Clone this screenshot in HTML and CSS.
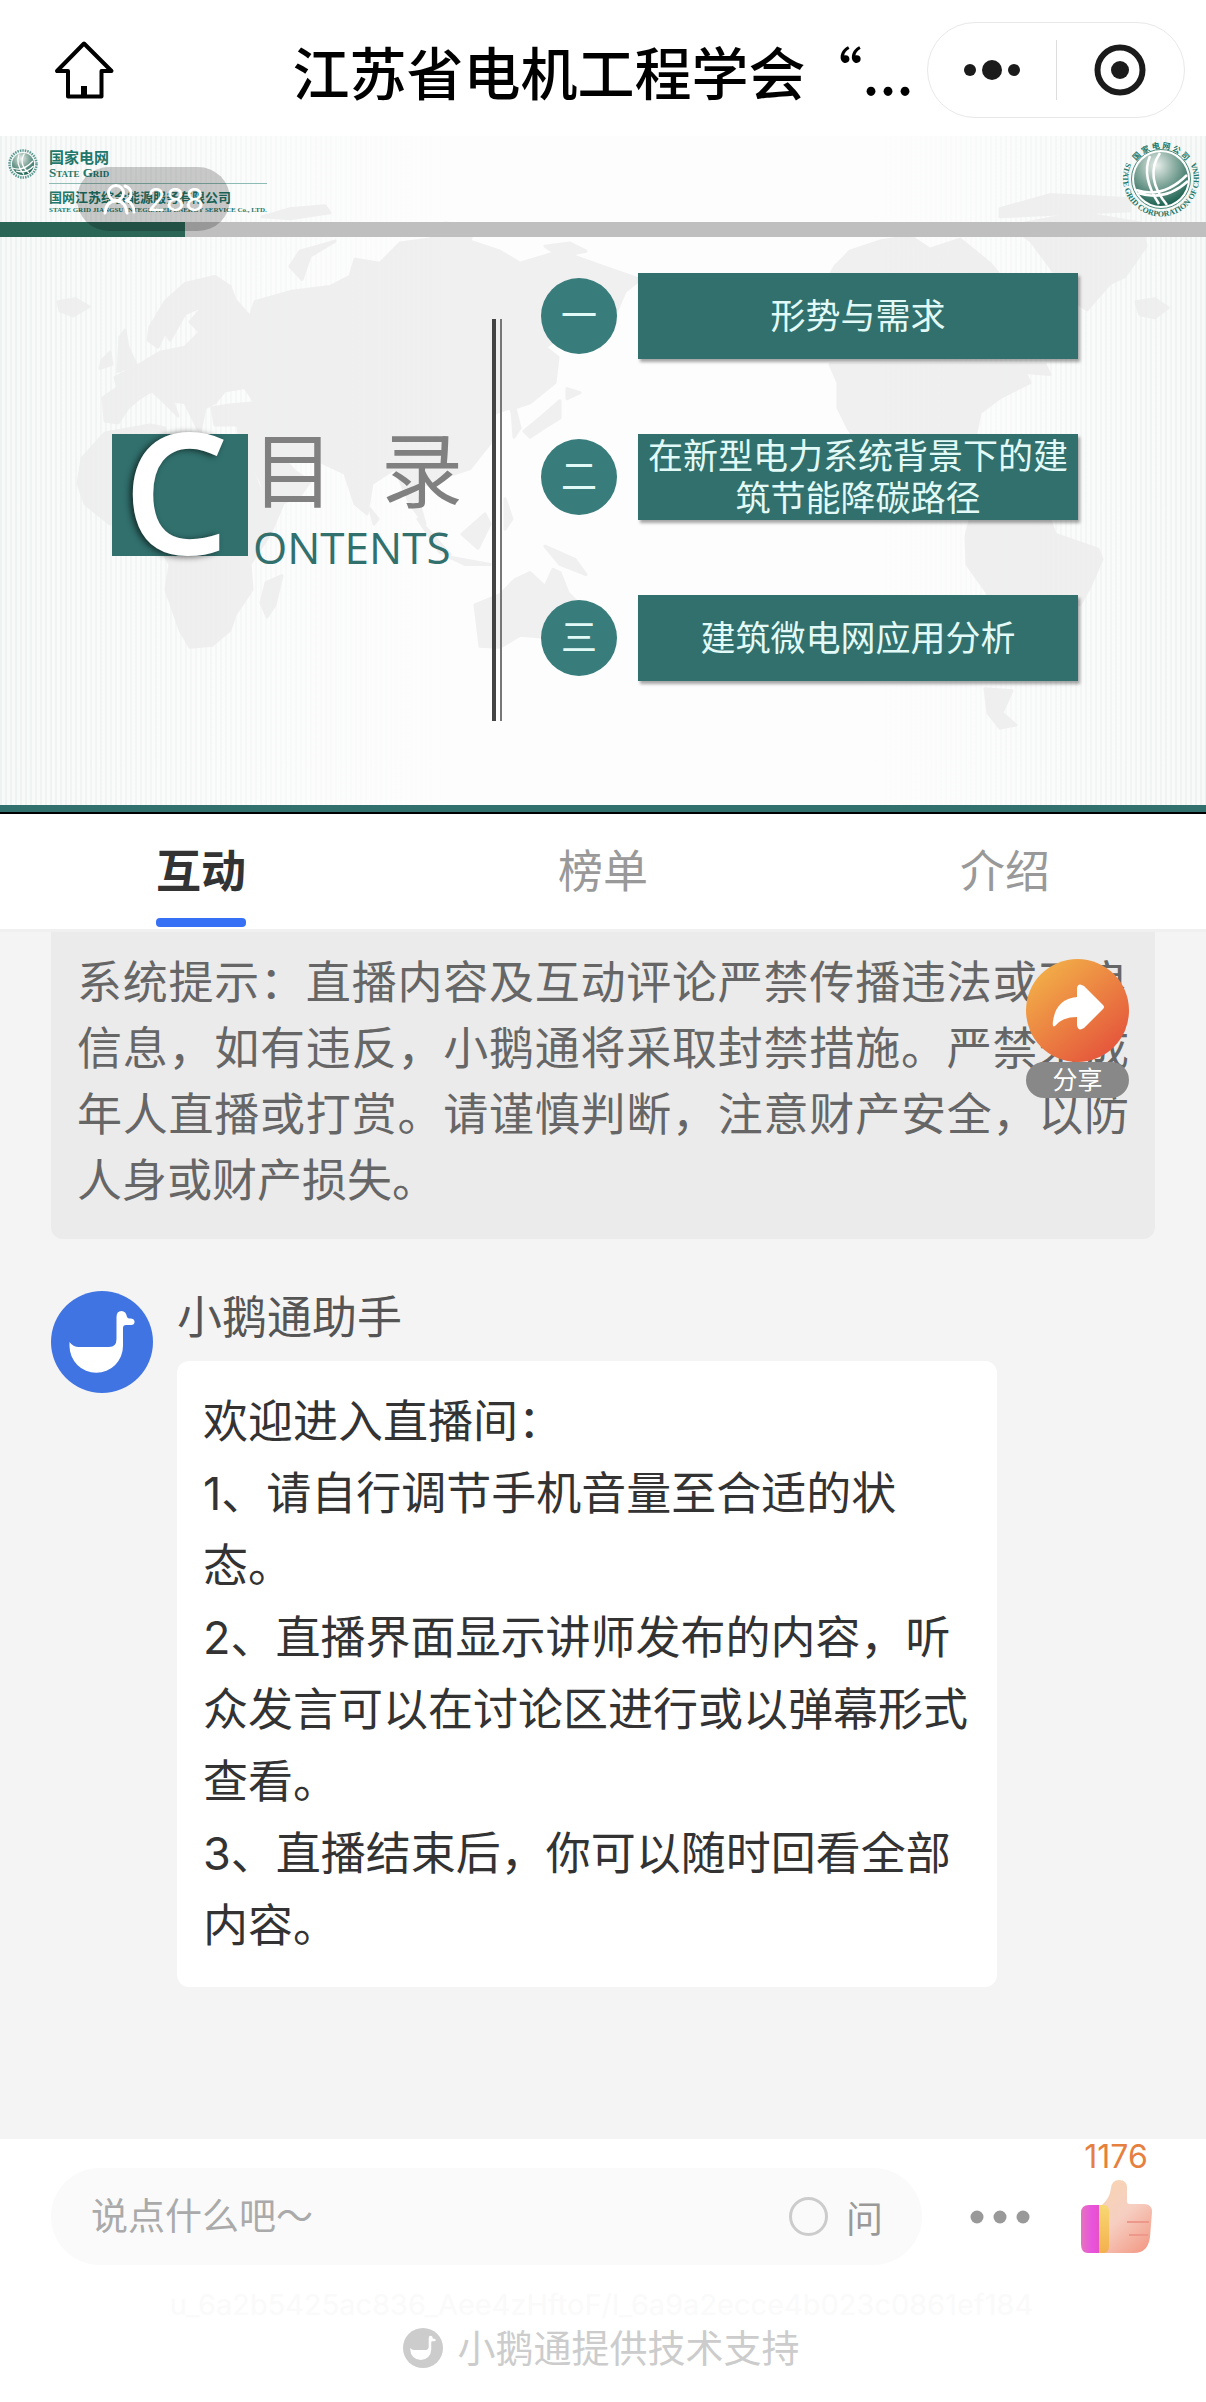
FILE: index.html
```html
<!DOCTYPE html>
<html lang="zh-CN">
<head>
<meta charset="utf-8">
<meta name="viewport" content="width=device-width, initial-scale=1">
<title>江苏省电机工程学会</title>
<link rel="stylesheet" href="styles.css">
</head>
<body>
<header class="nav">
  <button class="icon-button nav-home" type="button" aria-label="首页">
    <svg width="60" height="60" viewBox="0 0 60 60"><path d="M30 3.500L3 31H14V56.500H47.500V31H57.500Z" fill="none" stroke="#000" stroke-width="4" stroke-linejoin="round"/><path d="M27 46h6v10h-6z"/></svg>
  </button>
  <h1 class="nav-title">江苏省电机工程学会“...</h1>
  <div class="capsule">
    <button class="icon-button" type="button" aria-label="更多">
      <svg width="56" height="20" viewBox="0 0 56 20"><g fill="#1b1b1b"><circle cx="6" cy="10" r="6"/><circle cx="28" cy="10" r="10"/><circle cx="50" cy="10" r="6"/></g></svg>
    </button>
    <button class="icon-button" type="button" aria-label="关闭">
      <svg width="52" height="52" viewBox="0 0 52 52"><circle cx="26" cy="26" r="22.500" fill="none" stroke="#1b1b1b" stroke-width="6"/><circle cx="26" cy="26" r="9" fill="#1b1b1b"/></svg>
    </button>
  </div>
</header>

<section class="player">
  <svg class="map" viewBox="0 136 1206 669" preserveAspectRatio="none" aria-hidden="true">
    <g fill="#ededed" stroke="#ededed" stroke-width="3" stroke-linejoin="round">
      <path d="M103 395L105 418 118 420 128 405 140 395 152 388 165 400 178 413 172 398 185 400 200 430 205 405 215 400 225 388 245 385 255 400 232 402 212 405 215 422 238 422 240 440 262 480 268 505 300 492 310 478 295 468 283 455 320 458 345 470 355 500 367 510 372 480 395 465 410 500 425 520 415 485 440 475 470 465 490 440 495 410 510 405 520 425 515 405 530 400 555 380 558 355 545 345 560 335 585 320 590 300 600 345 612 320 625 290 640 278 600 264 560 250 520 262 500 250 470 240 474 225 445 222 430 238 400 242 380 262 355 258 350 275 330 285 290 290 255 300 250 315 235 298 230 285 215 275 185 282 165 300 150 325 148 338 158 345 165 330 170 338 185 312 205 303 190 320 200 330 185 345 160 350 140 362 115 375 118 385Z"/>
      <path d="M105 430L150 422 165 425 165 435 200 435 240 440 262 490 285 495 270 530 250 560 252 585 235 610 230 625 212 640 190 642 180 625 166 585 170 560 150 525 110 520 85 500 78 480 82 455Z"/>
      <path d="M266 578L282 571 275 600 267 612 261 598ZM475 600L500 590 515 575 530 568 545 582 553 565 560 568 568 588 580 600 582 612 565 640 545 632 520 630 500 642 480 641Z"/>
      <path d="M567 386L580 390 567 396ZM560 398L560 415 547 423 530 434 524 428 540 415ZM512 408L520 425 514 434ZM120 335L125 328 128 345 136 362 118 369ZM102 358L110 350 112 362 100 366ZM58 300L75 297 89 305 73 314 60 309ZM290 265L300 250 335 240 310 255 302 278ZM462 530L485 510 490 520 478 544ZM418 515L450 550 440 548ZM450 553L490 560 465 560ZM505 495L512 515 505 525ZM545 542L575 555 586 570 560 560ZM370 505L378 515 374 520Z"/>
      <path d="M830 362L838 380 838 405 848 425 855 435 975 435 980 410 1000 395 1030 380 1025 370 1050 372 1045 362ZM835 265L850 250 880 240 910 235 930 248 960 238 990 262 1000 274 830 274ZM1031 240L1010 225 1080 212 1140 222 1146 245 1125 275 1110 282 1087 308 1075 300 1072 280 1055 272ZM1136 300L1155 297 1168 306 1155 316 1140 313Z"/>
      <path d="M970 516L966 532 967 560 985 585 995 600 1080 600 1090 582 1102 555 1098 545 1055 530 1050 516ZM985 683L1012 685 1002 707 1016 719 1000 722 988 707ZM545 245L570 242 586 250 560 255ZM262 216L290 208 325 205 330 212 290 218ZM1000 208L1050 194 1130 198 1130 210 1000 216Z"/>
    </g>
  </svg>
  <div class="slide-head">
    <div class="company">
      <svg class="company-logo" width="30" height="30" viewBox="0 0 60 60"><circle cx="30" cy="30" r="27" fill="none" stroke="#2a7a70" stroke-width="5" stroke-dasharray="3 2" opacity=".75"/><circle cx="30" cy="30" r="22" fill="url(#globe)"/><path d="M9 38Q30 46 50 24M16 44Q36 50 51 34M22 11Q14 30 32 51M33 9Q20 30 42 48" fill="none" stroke="#fff" stroke-width="2.500"/></svg>
      <div class="company-names">
        <strong class="group-cn">国家电网</strong>
        <span class="group-en">State Grid</span>
        <strong class="unit-cn">国网江苏综合能源服务有限公司</strong>
        <span class="unit-en">STATE GRID JIANGSU INTEGRATED ENERGY SERVICE Co., LTD.</span>
      </div>
    </div>
    <svg class="seal" width="80" height="80" viewBox="0 0 80 80" aria-label="国家电网公司">
      <defs>
        <radialGradient id="globe" cx=".42" cy=".25" r=".8"><stop offset="0" stop-color="#e8efeb"/><stop offset=".4" stop-color="#8fb0a5"/><stop offset="1" stop-color="#115a49"/></radialGradient>
        <path id="arc-top" d="M9.500 40A30.500 30.500 0 0 1 70.500 40"/>
        <path id="arc-bottom" d="M5.300 24A38 38 0 1 0 74.700 24"/>
      </defs>
      <circle cx="40" cy="40" r="29.500" fill="#fff" stroke="#4d8d7d" stroke-width="1"/>
      <circle cx="40" cy="40" r="27" fill="url(#globe)"/>
      <path d="M15 51Q42 60 66 36M17 54Q44 63 67 42M29 17Q20 38 38 65M39 14Q23 38 46 66" fill="none" stroke="#fff" stroke-width="2.500"/>
      <text class="seal-cn"><textPath href="#arc-top" startOffset="50%" text-anchor="middle">国 家 电 网 公 司</textPath></text>
      <text class="seal-en"><textPath href="#arc-bottom" startOffset="50%" text-anchor="middle">STATE GRID CORPORATION OF CHINA</textPath></text>
    </svg>
  </div>
  <div class="slide-bar"></div>
  <div class="slide-main">
    <div class="contents">
      <span class="contents-c">C</span>
      <div>
        <h2 class="contents-cn"><span>目</span><span>录</span></h2>
        <p class="contents-en">ONTENTS</p>
      </div>
    </div>
    <div class="rule"></div>
    <ol class="topics">
      <li class="topic"><span class="topic-no">一</span><span class="topic-name">形势与需求</span></li>
      <li class="topic"><span class="topic-no">二</span><span class="topic-name">在新型电力系统背景下的建筑节能降碳路径</span></li>
      <li class="topic"><span class="topic-no">三</span><span class="topic-name">建筑微电网应用分析</span></li>
    </ol>
  </div>
  <div class="viewers">
    <svg width="34" height="31" viewBox="0 0 34 31" fill="none" stroke="#fff" stroke-width="3" stroke-linecap="round"><circle cx="13" cy="9" r="7.500"/><path d="M2 29Q3 17 13 17T24 29M22 2Q28 4 28 9.500 28 14 24 16.500 31 20 31 28"/></svg>
    <span>288</span>
  </div>
</section>

<nav class="tabs">
  <button class="tab tab-active" type="button">互动</button>
  <button class="tab" type="button">榜单</button>
  <button class="tab" type="button">介绍</button>
</nav>

<main class="chat">
  <p class="notice">系统提示：直播内容及互动评论严禁传播违法或不良信息，如有违反，小鹅通将采取封禁措施。严禁未成年人直播或打赏。请谨慎判断，注意财产安全，以防人身或财产损失。</p>
  <button class="share" type="button">
    <svg width="103" height="103" viewBox="0 0 103 103"><defs><linearGradient id="orange" x1=".15" y1=".1" x2=".8" y2=".9"><stop offset="0" stop-color="#f2ad48"/><stop offset="1" stop-color="#e5583c"/></linearGradient></defs><circle cx="51.500" cy="51.500" r="51.500" fill="url(#orange)"/><path d="M51 29Q52 23 58 27L77 46Q79 48 77 50L58 69Q52 73 51 66V58Q36 58 29 67 26 69 27 62 30 40 51 38Z" fill="#fff"/></svg>
    <span class="share-label">分享</span>
  </button>
  <article class="message">
    <svg class="avatar" width="102" height="102" viewBox="0 0 102 102"><circle cx="51" cy="51" r="51" fill="#4074e3"/><path id="goose" d="M18.500 51Q22 56 28 56H58Q65.500 56 65.500 48V26Q65.500 20 70.500 20 75 20 76 26 77 28 80 27.500 84 28 83.500 31.500 83 34 80 34H75Q72 34 72 37V55A26.700 26.700 0 0 1 18.500 55Z" fill="#fff"/></svg>
    <div class="message-body">
      <h3 class="author">小鹅通助手</h3>
      <div class="bubble">
        <p>欢迎进入直播间：</p>
        <p>1、请自行调节手机音量至合适的状态。</p>
        <p>2、直播界面显示讲师发布的内容，听众发言可以在讨论区进行或以弹幕形式查看。</p>
        <p>3、直播结束后，你可以随时回看全部内容。</p>
      </div>
    </div>
  </article>
</main>

<footer class="composer">
  <div class="composer-row">
    <div class="field">
      <input class="field-input" type="text" placeholder="说点什么吧～" aria-label="说点什么吧">
      <label class="ask"><input class="ask-radio" type="radio" name="ask">问</label>
    </div>
    <button class="icon-button more" type="button" aria-label="更多">
      <svg width="60" height="14" viewBox="0 0 60 14" fill="#999"><circle cx="7" cy="7" r="6.500"/><circle cx="30" cy="7" r="6.500"/><circle cx="53" cy="7" r="6.500"/></svg>
    </button>
    <button class="icon-button like" type="button" aria-label="点赞">
      <span class="like-count">1176</span>
      <svg width="72" height="76" viewBox="0 0 72 76"><defs><linearGradient id="skin" x1=".2" y1="0" x2=".8" y2="1"><stop offset="0" stop-color="#f7d3b4"/><stop offset=".45" stop-color="#f6cfc2"/><stop offset="1" stop-color="#f39c88"/></linearGradient><linearGradient id="cuff"><stop offset="0" stop-color="#e374bb"/><stop offset=".6" stop-color="#e953df"/><stop offset="1" stop-color="#e650c8"/></linearGradient><linearGradient id="band" x2="0" y2="1"><stop offset="0" stop-color="#f8d873"/><stop offset="1" stop-color="#f3b04e"/></linearGradient></defs><path d="M22 26Q30 19 31 9 32 1 39 1 47 1 47 9V20Q46 25 50 25H64Q72 25 72 33L70 58Q68 74 54 74H22Z" fill="url(#skin)"/><path d="M19 26V74H8Q1 74 1 65V34Q1 26 9 26Z" fill="url(#cuff)"/><path d="M19 26H24Q29 26 29 32V67Q29 74 24 74H19Z" fill="url(#band)"/><path d="M47 43H69M49 56H68" stroke="#ed988b" stroke-width="2"/></svg>
    </button>
  </div>
  <p class="trace">u_6a2b5425ac836_Aee4zHftoF/l_6a9a2ecce4b023c0861ef184</p>
  <p class="support">
    <svg width="40" height="40" viewBox="0 0 102 102"><circle cx="51" cy="51" r="51" fill="#ccc"/><use href="#goose"/></svg>
    小鹅通提供技术支持
  </p>
</footer>
</body>
</html>
```
FILE: styles.css
```css
* { box-sizing: border-box; }
body {
  margin: 0;
  min-height: 100vh;
  display: flex;
  flex-direction: column;
  background: #fff;
  color: #333;
  font-family: Inter, "Noto Sans CJK SC", sans-serif;
  font-size: 45px;
}
h1, h2, h3, p, ol { margin: 0; padding: 0; font-weight: 400; }
button, input { font: inherit; color: inherit; }
button { padding: 0; border: 0; background: none; }
svg { display: block; }
.icon-button { display: flex; align-items: center; justify-content: center; }

.nav {
  height: 136px;
  padding: 4px 21px 0 54px;
  display: flex;
  align-items: center;
  justify-content: space-between;
}
.nav-home { width: 225px; justify-content: flex-start; }
.nav-title {
  flex: 1;
  text-align: center;
  white-space: nowrap;
  font-family: "Noto Sans CJK SC", sans-serif;
  font-size: 57px;
  line-height: 80px;
  font-weight: 500;
  color: #000;
}
.capsule {
  width: 258px;
  height: 96px;
  display: flex;
  align-items: center;
  border: 1px solid #e8e8e8;
  border-radius: 48px;
}
.capsule .icon-button { flex: 1; height: 60px; }
.capsule .icon-button + .icon-button { border-left: 1px solid #ddd; }

.player {
  position: relative;
  border-bottom: 2px solid #000;
  background:
    linear-gradient(90deg, rgba(255,255,255,0), #fdfdfd 38%, #fdfdfd 72%, rgba(255,255,255,0)),
    repeating-linear-gradient(90deg, #eef2f1 0 2px, #f8faf9 2px 5px);
}
.map { position: absolute; inset: 0; width: 100%; height: 100%; opacity: .8; }
.slide-head {
  position: relative;
  height: 86px;
  padding: 3px 5px 0 8px;
  display: flex;
  justify-content: space-between;
  color: #21776a;
}
.company { display: flex; gap: 11px; padding-top: 10px; }
.company-names { display: flex; flex-direction: column; white-space: nowrap; }
.group-cn { font-size: 15px; line-height: 18px; }
.group-en {
  padding-bottom: 4px;
  border-bottom: 1px solid #8ebbb3;
  font: bold small-caps 13px/12px "Liberation Serif", serif;
}
.unit-cn { padding-top: 4px; font-size: 13px; line-height: 18px; }
.unit-en { font: bold 7px/8px "Liberation Serif", serif; }
.seal { overflow: visible; }
.seal text { fill: #21776a; font-weight: 700; }
.seal-cn { font-size: 8px; }
.seal-en { font-family: "Liberation Serif", serif; font-size: 8px; }
.slide-bar { position: relative; height: 15px; background: linear-gradient(90deg, #2b6555 185px, #bfbfbf 185px); }
.slide-main {
  position: relative;
  min-height: 575px;
  padding: 36px 128px 0 112px;
  display: flex;
  align-items: flex-start;
  border-bottom: 7px solid #31706d;
}
.contents { flex: 0 0 380px; margin-top: 161px; display: flex; }
.contents-c {
  width: 136px;
  height: 122px;
  padding-right: 8px;
  background: #31706d;
  color: #fff;
  text-align: center;
  font: 600 168px/110px "Open Sans", sans-serif;
  text-shadow: -3px 1px 6px rgba(0,0,0,.6);
}
.contents-cn { display: flex; gap: 47px; padding-left: 4px; font-size: 82px; line-height: 76px; color: #808080; }
.contents-en { padding-left: 5px; font: 500 44px/74px "Open Sans", sans-serif; color: #31706d; }
.rule { width: 10px; height: 402px; margin-top: 46px; border-left: 4px solid #444; border-right: 2px solid #777; }
.topics { flex: 1; margin-left: 39px; list-style: none; display: grid; gap: 75px; }
.topic { display: flex; align-items: center; gap: 21px; color: #e2faf7; }
.topic-no {
  width: 76px;
  height: 76px;
  border-radius: 50%;
  background: #387c7c;
  text-align: center;
  font-size: 36px;
  line-height: 76px;
}
.topic-name {
  flex: 1;
  height: 86px;
  display: flex;
  align-items: center;
  justify-content: center;
  background: #31706d;
  box-shadow: 2px 3px 3px rgba(0,0,0,.35);
  text-align: center;
  font-size: 35px;
  line-height: 42px;
}
.viewers {
  position: absolute;
  left: 77px;
  top: 31px;
  width: 153px;
  height: 64px;
  display: flex;
  align-items: center;
  justify-content: center;
  gap: 10px;
  border-radius: 32px;
  background: rgba(0,0,0,.2);
  color: #fff;
  font-size: 31px;
}

.tabs { display: flex; height: 118px; border-bottom: 3px solid #f0f0f0; }
.tab {
  flex: 1;
  display: flex;
  flex-direction: column;
  align-items: center;
  justify-content: flex-end;
  line-height: 66px;
  color: #999;
}
.tab::after { content: ""; width: 90px; height: 9px; margin: 13px 0 2px; border-radius: 4px; }
.tab-active { color: #333; font-weight: 700; }
.tab-active::after { background: #3670f5; }

.chat { position: relative; flex: 1; padding: 0 51px 151px; background: #f4f4f4; }
.notice {
  padding: 18px 26px 25px;
  border-radius: 0 0 12px 12px;
  background: #ebebeb;
  color: #666;
  line-height: 66px;
  text-align: justify;
}
.share { position: absolute; top: 27px; right: 77px; width: 103px; color: #fff; }
.share-label { display: block; border-radius: 18px; background: #888; font-size: 25px; line-height: 36px; }
.message { display: flex; gap: 24px; padding-top: 52px; }
.avatar { flex: none; }
.author { color: #555; font-size: 45px; line-height: 54px; }
.bubble {
  max-width: 820px;
  margin-top: 16px;
  padding: 25px 26px;
  border-radius: 12px;
  background: #fff;
  line-height: 72px;
}

.composer { padding: 0 54px 29px 51px; }
.composer-row { display: flex; align-items: flex-end; }
.field {
  flex: 1;
  height: 97px;
  display: flex;
  align-items: center;
  padding: 0 39px 0 40px;
  border-radius: 49px;
  background: #fafafa;
  font-size: 37px;
}
.field-input { flex: 1; min-width: 0; padding: 0; border: 0; outline: 0; background: none; }
.field-input::placeholder { color: #aaa; opacity: 1; }
.ask { display: flex; align-items: center; gap: 18px; color: #999; }
.ask-radio { appearance: none; width: 39px; height: 39px; margin: 0; border: 3px solid #ccc; border-radius: 50%; }
.more { height: 97px; margin: 0 50px 0 48px; }
.like { flex-direction: column; gap: 4px; padding-bottom: 10px; }
.like-count { font-size: 32px; line-height: 36px; color: #e5803f; }
.trace { margin-top: 22px; text-align: center; font-size: 29px; line-height: 36px; color: #fafafa; }
.support {
  display: flex;
  align-items: center;
  justify-content: center;
  gap: 14px;
  font-size: 38px;
  line-height: 50px;
  color: #ccc;
}
```
